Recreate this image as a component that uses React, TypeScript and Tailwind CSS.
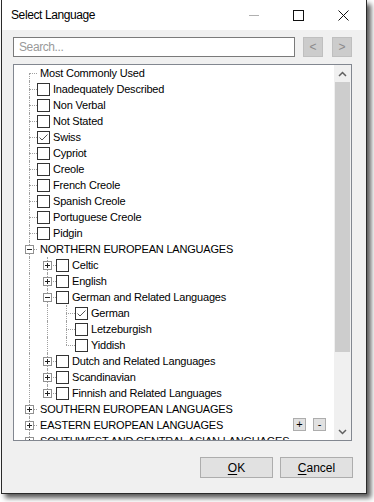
import React from 'react';

type Row = {
  label: string;
  level: number;
  box?: boolean;
  checked?: boolean;
  toggle?: '+' | '-';
  first?: boolean;
  last?: boolean;
};

// guide column widths per tree level (root line at x=29, then 47, 66)
const colW = ['w-[18px]', 'w-[19px]', 'w-[19px]'];

const rows: Row[] = [
  { label: 'Most Commonly Used', level: 0, first: true },
  { label: 'Inadequately Described', level: 0, box: true },
  { label: 'Non Verbal', level: 0, box: true },
  { label: 'Not Stated', level: 0, box: true },
  { label: 'Swiss', level: 0, box: true, checked: true },
  { label: 'Cypriot', level: 0, box: true },
  { label: 'Creole', level: 0, box: true },
  { label: 'French Creole', level: 0, box: true },
  { label: 'Spanish Creole', level: 0, box: true },
  { label: 'Portuguese Creole', level: 0, box: true },
  { label: 'Pidgin', level: 0, box: true },
  { label: 'NORTHERN EUROPEAN LANGUAGES', level: 0, toggle: '-' },
  { label: 'Celtic', level: 1, box: true, toggle: '+' },
  { label: 'English', level: 1, box: true, toggle: '+' },
  { label: 'German and Related Languages', level: 1, box: true, toggle: '-' },
  { label: 'German', level: 2, box: true, checked: true },
  { label: 'Letzeburgish', level: 2, box: true },
  { label: 'Yiddish', level: 2, box: true, last: true },
  { label: 'Dutch and Related Languages', level: 1, box: true, toggle: '+' },
  { label: 'Scandinavian', level: 1, box: true, toggle: '+' },
  { label: 'Finnish and Related Languages', level: 1, box: true, toggle: '+', last: true },
  { label: 'SOUTHERN EUROPEAN LANGUAGES', level: 0, toggle: '+' },
  { label: 'EASTERN EUROPEAN LANGUAGES', level: 0, toggle: '+' },
  { label: 'SOUTHWEST AND CENTRAL ASIAN LANGUAGES', level: 0, toggle: '+' },
];

function Dots({ className }: { className: string }) {
  return <span className={`absolute border-dotted border-[#a0a0a0] ${className}`} />;
}

function Toggle({ open }: { open: boolean }) {
  return (
    <svg className="absolute left-[6px] top-[4px]" width="9" height="9" viewBox="0 0 9 9">
      <rect x="0.5" y="0.5" width="8" height="8" fill="#fff" stroke="#919191" />
      <path d="M2 4.5h5" stroke="#222" />
      {!open && <path d="M4.5 2v5" stroke="#222" />}
    </svg>
  );
}

function Check({ on }: { on?: boolean }) {
  return (
    <span className="flex h-[13px] w-[13px] shrink-0 items-center justify-center border border-[#333] bg-white">
      {on && (
        <svg width="11" height="11" viewBox="0 0 11 11">
          <path d="M1.5 5.5l2.5 2.5 5.5-5.5" fill="none" stroke="#555" strokeWidth="1" />
        </svg>
      )}
    </span>
  );
}

function TreeRow({ row }: { row: Row }) {
  // ancestor columns: root always continues, NORTHERN > German continues (Dutch follows)
  const trail = Array.from({ length: row.level }, () => true);
  return (
    <div className="flex h-4 items-center pl-[5px]">
      {trail.map((_, k) => (
        <span key={k} className={`relative h-4 shrink-0 ${colW[k]}`}>
          <Dots className="left-[10px] top-0 h-4 border-l" />
        </span>
      ))}
      <span className={`relative h-4 shrink-0 ${colW[row.level]}`}>
        {!row.first && <Dots className="left-[10px] top-0 h-[8px] border-l" />}
        {!row.last && <Dots className="left-[10px] top-[8px] h-[8px] border-l" />}
        <Dots className="left-[10px] right-0 top-[8px] border-t" />
        {row.toggle && <Toggle open={row.toggle === '-'} />}
      </span>
      {row.box && <Check on={row.checked} />}
      <span className="ml-[3px] whitespace-nowrap">{row.label}</span>
    </div>
  );
}

function Chevron({ up }: { up?: boolean }) {
  return (
    <svg width="9" height="6" viewBox="0 0 9 6">
      <path
        d={up ? 'M1 5L4.5 1.5 8 5' : 'M1 1l3.5 3.5L8 1'}
        fill="none"
        stroke="#606060"
        strokeWidth="1.5"
      />
    </svg>
  );
}

export default function App() {
  return (
    <div className="h-[502px] w-[374px] overflow-hidden bg-white font-['Liberation_Sans',Arial,sans-serif] text-black">
      <div className="ml-[1px] flex h-[494px] w-[366px] flex-col border-x border-b border-[#2a2a2a] bg-[#f0f0f0] shadow-[4px_4px_5px_rgba(0,0,0,0.65)]">
        {/* title bar */}
        <div className="flex h-[30px] shrink-0 items-center bg-white">
          <span className="ml-[9px] text-[12px] tracking-[-0.4px]">Select Language</span>
          <div className="ml-auto flex h-full">
            <div className="flex w-[45px] items-center justify-center">
              <svg width="10" height="1" viewBox="0 0 10 1">
                <path d="M0 0.5h10" stroke="#b0b0b0" />
              </svg>
            </div>
            <div className="flex w-[45px] items-center justify-center">
              <svg width="11" height="11" viewBox="0 0 11 11">
                <rect x="0.5" y="0.5" width="10" height="10" fill="none" stroke="#111" />
              </svg>
            </div>
            <div className="flex w-[45px] items-center justify-center">
              <svg width="11" height="11" viewBox="0 0 11 11">
                <path d="M0.5 0.5l10 10M10.5 0.5l-10 10" stroke="#111" />
              </svg>
            </div>
          </div>
        </div>

        {/* body */}
        <div className="flex flex-1 flex-col pl-[11px] pr-[13px] pt-[7px]">
          <div className="flex items-center">
            <div className="flex h-[20px] w-[282px] items-center border border-[#7a7a7a] bg-white pl-[5px] text-[12px] tracking-[-0.4px] text-[#9a9a9a]">
              Search...
            </div>
            <div className="ml-[8px] flex h-[20px] w-[20px] items-center justify-center border border-[#bfbfbf] bg-[#cccccc] text-[12px] text-[#8a8a8a]">
              &lt;
            </div>
            <div className="ml-[9px] flex h-[20px] w-[20px] items-center justify-center border border-[#bfbfbf] bg-[#cccccc] text-[12px] text-[#8a8a8a]">
              &gt;
            </div>
          </div>

          {/* tree */}
          <div className="relative mt-[7px] flex h-[377px] w-[339px] border border-[#828790] bg-white">
            <div className="flex-1 overflow-hidden text-[11px] tracking-[-0.2px]">
              {rows.map((r) => (
                <TreeRow key={r.label} row={r} />
              ))}
            </div>
            <div className="flex w-[17px] flex-col bg-[#f0f0f0]">
              <div className="flex h-[17px] items-center justify-center">
                <Chevron up />
              </div>
              <div className="mx-[1px] h-[270px] bg-[#cdcdcd]" />
              <div className="flex-1" />
              <div className="flex h-[17px] items-center justify-center">
                <Chevron />
              </div>
            </div>

            {/* expand / collapse all */}
            <div className="absolute left-[279px] top-[353px] flex gap-[7px]">
              <div className="flex h-[13px] w-[13px] items-center justify-center border border-[#adadad] bg-[#e1e1e1] text-[11px] leading-none">
                +
              </div>
              <div className="flex h-[13px] w-[13px] items-center justify-center border border-[#adadad] bg-[#e1e1e1] text-[11px] leading-none">
                -
              </div>
            </div>
          </div>

          {/* dialog buttons */}
          <div className="mt-[16px] flex justify-end gap-[7px]">
            <div className="flex h-[21px] w-[73px] items-center justify-center border border-[#adadad] bg-[#e1e1e1] text-[12px]">
              <span className="underline underline-offset-2">O</span>K
            </div>
            <div className="flex h-[21px] w-[73px] items-center justify-center border border-[#adadad] bg-[#e1e1e1] text-[12px]">
              <span className="underline underline-offset-2">C</span>ancel
            </div>
          </div>
        </div>
      </div>
    </div>
  );
}
